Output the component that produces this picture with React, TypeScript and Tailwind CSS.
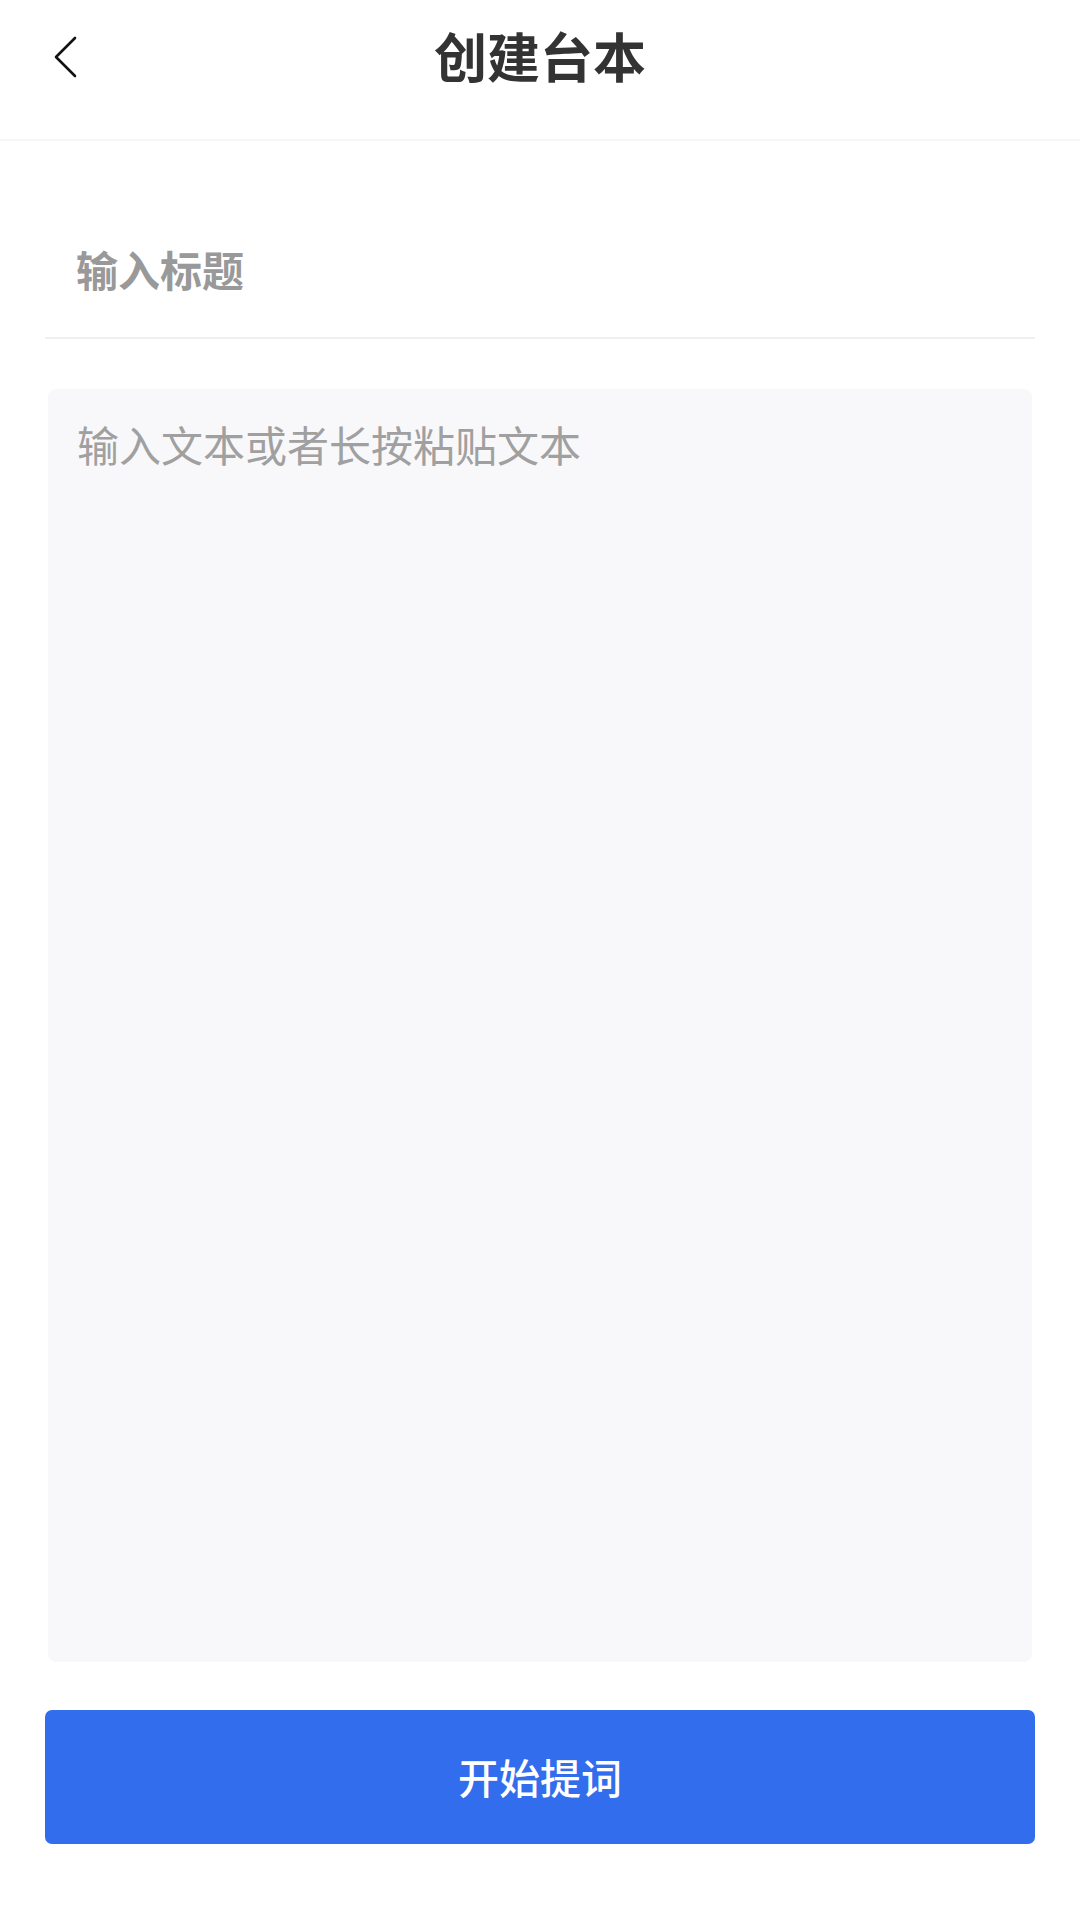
import React, { useState } from 'react';

const font = { fontFamily: '"Noto Sans CJK SC", "Noto Sans", sans-serif' };

const BackIcon = () => (
  <svg width="26" height="44" viewBox="0 0 26 44" fill="none">
    <path d="M23 3 L4 22 L23 41" stroke="#111" strokeWidth="2.6" strokeLinecap="round" strokeLinejoin="round" />
  </svg>
);

const CreateScript = () => {
  const [title, setTitle] = useState('');
  const [text, setText] = useState('');

  return (
    <div className="flex h-[1920px] w-[1080px] flex-col bg-white" style={font}>
      {/* header */}
      <header className="relative flex h-[141px] shrink-0 justify-center border-b-2 border-[#f6f6f6] pt-[29px]">
        <button type="button" className="absolute left-[52px] top-[35px] outline-none">
          <BackIcon />
        </button>
        <h1 className="text-[53px] leading-none font-bold text-[#333333]">创建台本</h1>
      </header>

      <section className="flex flex-1 flex-col px-[45px]">
        <div className="flex h-[198px] items-end border-b-2 border-[#efefef] pb-[38px] pl-[31px]">
          <input
            value={title}
            onChange={(e) => setTitle(e.target.value)}
            placeholder="输入标题"
            className="w-full bg-transparent text-[42px] leading-none font-bold text-[#333] outline-none placeholder:text-[#999999]"
          />
        </div>

        <div className="mx-[3px] mt-[50px] h-[1273px] rounded-lg bg-[#f8f8fa] px-[29px] pt-[32px]">
          <textarea
            value={text}
            onChange={(e) => setText(e.target.value)}
            placeholder="输入文本或者长按粘贴文本"
            className="h-full w-full resize-none bg-transparent text-[42px] leading-[1.1] text-[#333] outline-none placeholder:text-[#a0a0a0]"
          />
        </div>

        <button
          type="button"
          className="mt-[48px] flex h-[134px] w-full items-center justify-center rounded-[7px] bg-[#316dec] text-[41px] font-medium text-white outline-none"
        >
          开始提词
        </button>
      </section>
    </div>
  );
};

export default function App() {
  return <CreateScript />;
}
